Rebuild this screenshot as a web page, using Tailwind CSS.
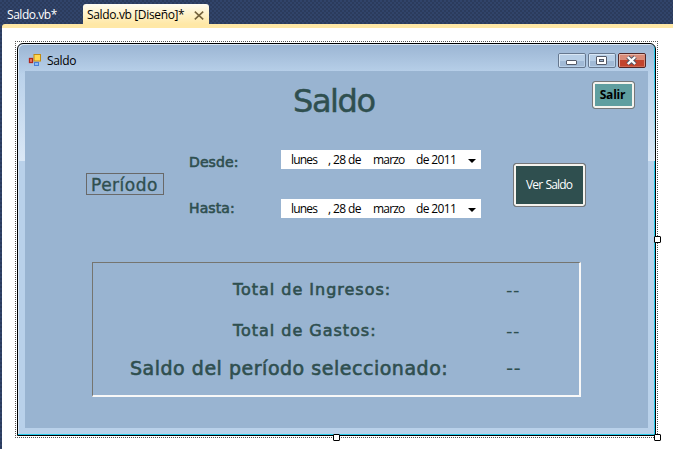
<!DOCTYPE html>
<html lang="es">
<head>
<meta charset="utf-8">
<title>Saldo</title>
<script src="https://cdn.jsdelivr.net/npm/@tailwindcss/browser@4"></script>
</head>
<body class="w-[673px] h-[449px] overflow-hidden bg-[#2b3c5b] font-['Open_Sans','Noto_Sans',sans-serif] text-black">
<div class="relative flex h-[449px] flex-col bg-[repeating-conic-gradient(#2b3b5c_0_25%,#31446a_0_50%)] bg-[length:4px_4px]">
  <header class="flex h-6 shrink-0 items-end text-[12px] leading-5 whitespace-nowrap">
    <div class="w-[83px] pl-[7px] text-white"><span class="relative top-px tracking-[-0.45px]">Saldo.vb*</span></div>
    <div class="flex h-5 w-[126px] items-center justify-between rounded-t-[3px] bg-gradient-to-b from-[#fffcf2] via-[#fff2c9] to-[#ffe8a6] pl-1 pr-[5px]">
      <span class="relative top-px tracking-[-0.35px]">Saldo.vb [Diseño]*</span>
      <svg class="mt-[2px] h-[9px] w-[10px]" viewBox="0 0 10 9"><path d="M.8.7 9.2 8.3M9.2.7.8 8.3" stroke="#75633d" stroke-width="1.6"/></svg>
    </div>
  </header>
  <main class="ml-[2px] flex-1 rounded-tl-[3px] border-t-4 border-[#ffe8a6] bg-white pt-[13px] pl-[13px]">
    <div class="relative h-[397px] w-[643px] border border-dotted border-[#555] p-px">
      <section class="flex h-[393px] w-[639px] flex-col rounded-t-[6px] border border-black bg-gradient-to-b from-[#9bb5d3] via-[#b9d1ea] via-[30px] to-[#b9d1ea] shadow-[inset_-1px_-1px_0_#22c9ea,inset_1px_1px_0_#dce9f6]">
        <div class="flex h-[27px] items-center pl-[10px] pr-[9px]">
          <svg class="mt-[5px] h-3 w-[14px]" viewBox="0 0 14 12"><rect x="1.5" y="4.5" width="3" height="4" fill="#f0806a" stroke="#b0261b" stroke-width="1.3"/><rect x="6" y=".5" width="6.5" height="6.5" fill="#ffd951" stroke="#c28b12"/><rect x="6.5" y="8.5" width="4" height="3" fill="#8bbdf8" stroke="#4a7fd4"/></svg>
          <span class="mt-[6px] ml-[5px] text-[12px] tracking-[-0.35px]">Saldo</span>
          <div class="mt-[6px] ml-auto flex gap-[2px]">
            <svg class="h-[15px] w-7" viewBox="0 0 28 15"><rect x=".5" y=".5" width="27" height="14" rx="1.5" fill="#b8cfe7" stroke="#66788f"/><path d="M1.5 13.5v-12h25" fill="none" stroke="#d9e7f5"/><path d="M2 8h24v5H2z" fill="#a1bad6"/><rect x="8.5" y="7.5" width="10" height="4" rx=".5" fill="#fff" stroke="#555b69"/></svg>
            <svg class="h-[15px] w-7" viewBox="0 0 28 15"><rect x=".5" y=".5" width="27" height="14" rx="1.5" fill="#b8cfe7" stroke="#66788f"/><path d="M1.5 13.5v-12h25" fill="none" stroke="#d9e7f5"/><path d="M2 8h24v5H2z" fill="#a1bad6"/><rect x="8.5" y="3.5" width="10" height="8" rx=".5" fill="#fff" stroke="#555b69"/><rect x="11.5" y="6.5" width="4" height="2" fill="#9db5d0" stroke="#555b69"/></svg>
            <svg class="h-[15px] w-7" viewBox="0 0 28 15"><rect x=".5" y=".5" width="27" height="14" rx="1.5" fill="#d98b78" stroke="#522626"/><path d="M1.5 13.5v-12h25" fill="none" stroke="#e7b7aa"/><path d="M2 7h24v6.5H2z" fill="#c2442d"/><path d="m9.8 4 7.4 7m0-7-7.4 7" stroke="#535666" stroke-width="4.4"/><path d="m9.8 4 7.4 7m0-7-7.4 7" stroke="#fff" stroke-width="2.4"/></svg>
          </div>
        </div>
        <div class="flex flex-1 bg-gradient-to-b from-transparent to-[#dbe8f6] to-[90px] bg-[length:100%_90px] bg-no-repeat px-[7px] pb-[7px]">
        <div class="flex flex-1 flex-col bg-[#99b4d1] font-['DejaVu_Sans',sans-serif] text-[#2f4f4f] whitespace-nowrap">
          <div class="flex h-[79px] items-start justify-between pr-[13px] pl-[268px]">
            <h1 class="mt-[10px] text-[32px] leading-[40px] tracking-[-1.4px] [-webkit-text-stroke:0.5px_#2f4f4f]">Saldo</h1>
            <button class="mt-[10px] h-7 w-[43px] rounded-[3px] border border-[#76777a] bg-[#5f9ea0] pr-[2px] font-['Open_Sans',sans-serif] text-[12px] leading-6 font-bold tracking-[-0.2px] text-black shadow-[inset_0_0_0_2px_#f5f3ee]">Salir</button>
          </div>
          <div class="flex h-[112px]">
            <div class="mt-[23px] ml-[61px] h-[22px] w-[78px] border border-[#696969] pl-1 text-[17px] leading-[22px] tracking-[0.5px] [-webkit-text-stroke:0.35px_#2f4f4f]">Período</div>
            <div class="ml-[25px] flex w-[92px] flex-col text-[14px] leading-5 tracking-[0.1px] [-webkit-text-stroke:0.6px_#2f4f4f]">
              <span class="mt-[2px]">Desde:</span><span class="mt-[26px]">Hasta:</span>
            </div>
            <div class="flex w-[200px] flex-col gap-[30px] font-['Open_Sans',sans-serif] text-[12px] leading-[20px] tracking-[-0.8px] text-black">
              <div class="flex h-[19px] bg-white pl-[10px]"><span class="w-[37px]">lunes</span><span class="w-[45px] tracking-[-0.6px]">, 28 de</span><span class="w-[43px]">marzo</span><span class="w-[52px] tracking-[-0.65px]">de 2011</span><svg class="mt-[9px] h-1 w-[8px]" viewBox="0 0 8 4"><path d="M0 0h8L4 4z"/></svg></div>
              <div class="flex h-[19px] bg-white pl-[10px]"><span class="w-[37px]">lunes</span><span class="w-[45px] tracking-[-0.6px]">, 28 de</span><span class="w-[43px]">marzo</span><span class="w-[52px] tracking-[-0.65px]">de 2011</span><svg class="mt-[9px] h-1 w-[8px]" viewBox="0 0 8 4"><path d="M0 0h8L4 4z"/></svg></div>
            </div>
            <button class="mt-[13px] ml-8 h-11 w-[73px] rounded-[3px] border border-[#76777a] bg-[#2f4f4f] pr-[2px] pl-px font-['Open_Sans',sans-serif] text-[12px] tracking-[-0.85px] text-white shadow-[inset_0_0_0_2px_#f5f3ee] [word-spacing:1px]">Ver Saldo</button>
          </div>
          <dl class="ml-[67px] grid h-[135px] w-[489px] grid-cols-[413px_1fr] grid-rows-[46px_37px_1fr] border-t border-r-2 border-b-2 border-l border-t-[#757570] border-r-[#f8f8f8] border-b-[#f8f8f8] border-l-[#757570] text-[16px] leading-6 tracking-[0.98px] [-webkit-text-stroke:0.6px_#2f4f4f]">
            <dt class="pt-[15px] pl-[140px]">Total de Ingresos:</dt><dd class="pt-[15px] text-[18px] tracking-[0.4px] [-webkit-text-stroke:0px]">--</dd>
            <dt class="pt-[10px] pl-[140px]">Total de Gastos:</dt><dd class="pt-[10px] text-[18px] tracking-[0.4px] [-webkit-text-stroke:0px]">--</dd>
            <dt class="pt-[10px] pl-[37px] text-[19px] tracking-[0.52px]">Saldo del período seleccionado:</dt><dd class="pt-[10px] text-[20px] tracking-[0.3px] [-webkit-text-stroke:0px]">--</dd>
          </dl>
        </div>
        </div>
      </section>
      <i class="absolute top-[194px] left-[638px] size-[7px] rounded-[1px] border border-black bg-white"></i>
      <i class="absolute top-[392px] left-[317px] size-[7px] rounded-[1px] border border-black bg-white"></i>
      <i class="absolute top-[392px] left-[638px] size-[7px] rounded-[1px] border border-black bg-white"></i>
    </div>
  </main>
</div>
</body>
</html>
